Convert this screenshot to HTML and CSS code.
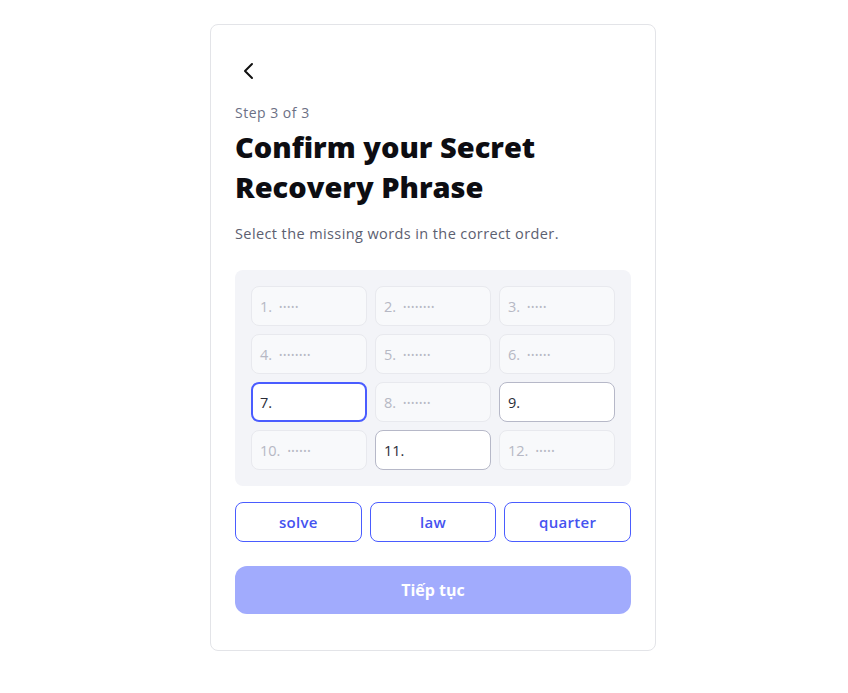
FILE: index.html
```html
<!DOCTYPE html>
<html>
<head>
<meta charset="utf-8">
<link rel="stylesheet" href="styles.css">
</head>
<body>
<div class="page">
  <div class="card">
    <button class="back" aria-label="Back">
      <svg width="24" height="24" viewBox="0 0 24 24" fill="none"><path d="M15 5l-7 7 7 7" stroke="#111" stroke-width="2" stroke-linecap="round" stroke-linejoin="round"/></svg>
    </button>
    <div class="step">Step 3 of 3</div>
    <h1 class="title">Confirm your Secret Recovery Phrase</h1>
    <p class="subtitle">Select the missing words in the correct order.</p>
    <div class="grid-box">
      <div class="cell"><span class="num">1.</span><span class="dots">•••••</span></div>
      <div class="cell"><span class="num">2.</span><span class="dots">••••••••</span></div>
      <div class="cell"><span class="num">3.</span><span class="dots">•••••</span></div>
      <div class="cell"><span class="num">4.</span><span class="dots">••••••••</span></div>
      <div class="cell"><span class="num">5.</span><span class="dots">•••••••</span></div>
      <div class="cell"><span class="num">6.</span><span class="dots">••••••</span></div>
      <div class="cell input active"><span class="num">7.</span></div>
      <div class="cell"><span class="num">8.</span><span class="dots">•••••••</span></div>
      <div class="cell input"><span class="num">9.</span></div>
      <div class="cell"><span class="num">10.</span><span class="dots">••••••</span></div>
      <div class="cell input"><span class="num">11.</span></div>
      <div class="cell"><span class="num">12.</span><span class="dots">•••••</span></div>
    </div>
    <div class="words">
      <button class="word">solve</button>
      <button class="word">law</button>
      <button class="word">quarter</button>
    </div>
    <button class="continue">Tiếp tục</button>
  </div>
</div>
</body>
</html>
```
FILE: styles.css
```css
* { box-sizing: border-box; }
html, body { margin: 0; padding: 0; background: #fff; }
body { font-family: "Open Sans", "Noto Sans", sans-serif; color: #111; }
.page { display: flex; justify-content: center; padding: 24px 0 0 18px; }
.card {
  width: 446px;
  border: 1px solid #e3e4e8;
  border-radius: 8px;
  padding: 34px 24px 36px;
  display: flex;
  flex-direction: column;
}
.back {
  width: 24px; height: 24px; padding: 0; margin: 0 0 0 2px;
  border: 0; background: none; display: flex; align-items: center; justify-content: center;
}
.step { margin-top: 20px; font-size: 14px; line-height: 20px; color: #6b7085; letter-spacing: 0.5px; }
.title { margin: 4px 0 0; font-size: 29px; line-height: 40px; font-weight: 800; color: #0d0d12; letter-spacing: 0; }
.subtitle { margin: 17px 0 0; font-size: 14.5px; line-height: 20px; color: #5c6070; letter-spacing: 0.4px; }
.grid-box {
  margin-top: 26px;
  background: #f3f4f8;
  border-radius: 8px;
  padding: 16px;
  display: grid;
  grid-template-columns: repeat(3, 1fr);
  gap: 8px;
}
.cell {
  height: 40px;
  border: 1px solid #e8e9ee;
  background: #f8f9fb;
  border-radius: 8px;
  display: flex; align-items: center;
  padding: 0 8px;
  font-size: 14.5px;
  color: #b6b8c4;
}
.cell .num { margin-right: 7px; }
.cell .dots { font-size: 9px; letter-spacing: 0.6px; color: #b6b8c4; }
.cell.input { background: #fff; border-color: #b6b8c8; color: #2a2c38; }
.cell.active { border: 2px solid #4a5cff; padding: 0 7px; }
.words { margin-top: 16px; display: grid; grid-template-columns: repeat(3, 1fr); gap: 8px; }
.word {
  height: 40px;
  border: 1px solid #4a5cff;
  background: #fff;
  border-radius: 8px;
  color: #4553f0;
  font-family: inherit;
  font-size: 15px;
  font-weight: 600;
  letter-spacing: 0.3px;
}
.continue {
  margin-top: 24px;
  height: 48px;
  border: 0;
  border-radius: 12px;
  background: #a1abfd;
  color: #fff;
  font-family: inherit;
  font-size: 16px;
  font-weight: 700;
}
```
